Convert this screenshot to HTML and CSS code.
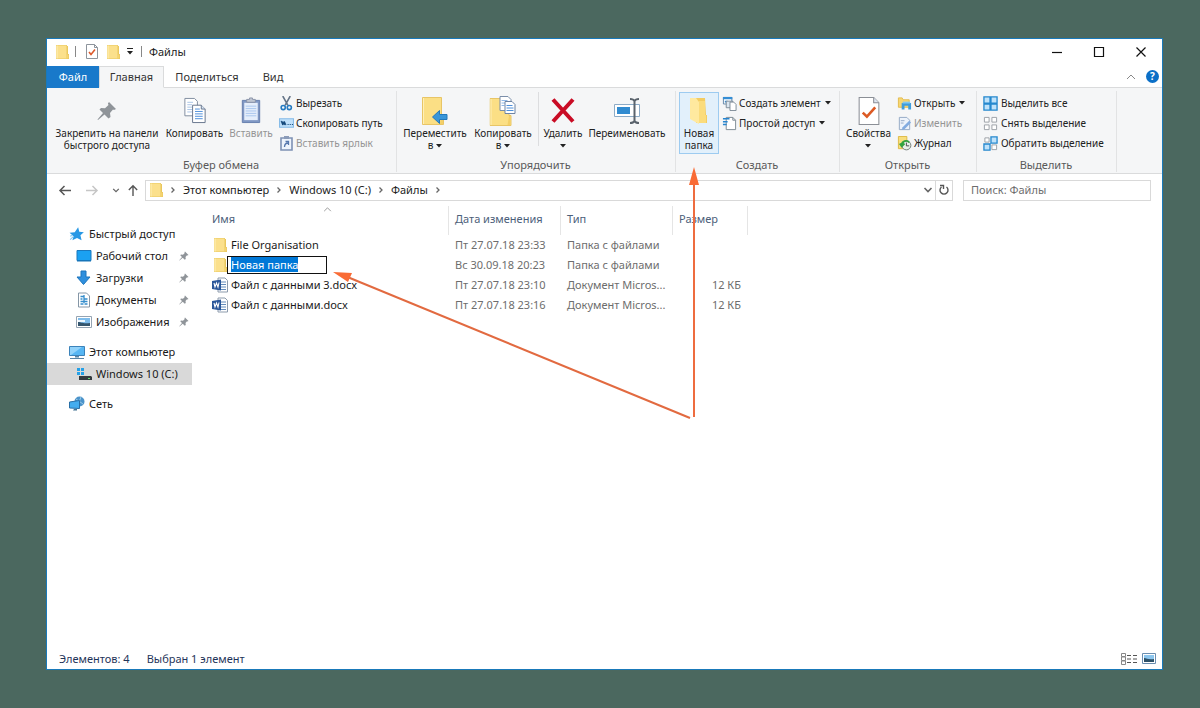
FILE: index.html
```html
<!DOCTYPE html>
<html lang="ru">
<head>
<meta charset="utf-8">
<title>Файлы</title>
<meta name="viewport" content="width=device-width, initial-scale=1">
<link rel="stylesheet" href="styles.css">
</head>
<body>
<svg class="sprite" aria-hidden="true">
  <symbol id="folder" viewBox="0 0 14 16"><path fill="#e9c75e" d="M1 1h11v1h1v8h1v5H1z"/><path fill="#fbe08c" d="M1.500 1.500h10v13h-10z"/><path fill="#fff0b8" d="M1.500 1.500h1v13h-1z"/><path fill="#f5d470" d="M12 10.500h1.500v4H11z"/></symbol>
  <symbol id="folder-big" viewBox="0 0 24 28"><path fill="#fbdf85" stroke="#e8c566" d="M.5.5h19v17h2v10H.5z"/><path fill="#f3cf68" d="M19.500 18h1.500v9h-3z"/><path fill="#fff0b8" d="M1 1h1v26H1z"/></symbol>
  <symbol id="folder-new" viewBox="0 0 20 28"><path fill="#f3cc62" d="M7 1h9l1 17h1v8H7z"/><path fill="#ffe99f" d="M1 1h6l3 4v22l-9-5z"/><path fill="#fbdc7c" d="M10 4h6v14h1v8h-7z"/></symbol>
  <symbol id="check-doc" viewBox="0 0 12 15"><path fill="#fff" stroke="#8d949c" d="M.5.5h8l3 3v11H.5z"/><path fill="none" stroke="#8d949c" d="M8.500.5v3h3"/><path fill="none" stroke="#dc5a2c" stroke-width="1.600" d="M3 8l2 2.500L9 5.500"/></symbol>
  <symbol id="props" viewBox="0 0 20 27"><path fill="#fff" stroke="#8b8f96" d="M.5.5h14l5 5v21H.5z"/><path fill="#dde5f0" stroke="#8b8f96" d="M14.500.5v5h5"/><path fill="none" stroke="#dc5a24" stroke-width="2.500" d="M4 15l4 4 8-9"/></symbol>
  <symbol id="pin" viewBox="0 0 20 20"><path fill="#8f9499" d="M12 1l7 7-2 1-1-.5-3 3.500.5 4-2 1.500-4-4L1 19l-.5-.5L6 12 2.500 8.500 4 7l4 .3 3.500-3.300-.6-1.500z"/></symbol>
  <symbol id="copy" viewBox="0 0 24 28"><path fill="#fff" stroke="#7f8b9e" d="M1.500 1.500h10l3 3v15h-13z"/><path stroke="#a9c4e6" d="M4 5.500h6M4 8h5M4 10.500h5M4 13h5M4 15.500h5"/><path fill="#fff" stroke="#66758c" d="M9.500 8.500h9l4 4v14h-13z"/><path fill="#d8e4f3" stroke="#66758c" d="M18.500 8.500v4h4"/><path stroke="#4e8fdb" d="M12 12.500h5M12 15h8M12 17.500h8M12 20h8M12 22.500h8"/></symbol>
  <symbol id="paste" viewBox="0 0 20 28"><path fill="#8098c4" stroke="#667fae" d="M1 3.500h18v23H1z"/><path fill="#e5eefb" d="M3 6h14v18H3z"/><path fill="#c0c7d3" stroke="#8993a8" d="M5.500 5.500v-3h3V1h3v1.500h3v3z"/><path stroke="#a9c6ed" d="M4.500 9.500h11M4.500 12h11M4.500 14.500h11M4.500 17h11M4.500 19.500h11"/></symbol>
  <symbol id="scissors" viewBox="0 0 14 16"><path fill="none" stroke="#647487" stroke-width="1.700" d="M3 0l5.500 10M11 0L5.500 10"/><circle cx="3.500" cy="12.300" r="2.200" fill="none" stroke="#247ac1" stroke-width="1.700"/><circle cx="10" cy="12.300" r="2.200" fill="none" stroke="#247ac1" stroke-width="1.700"/></symbol>
  <symbol id="path" viewBox="0 0 14 10"><path fill="#bfe0fa" stroke="#87bce8" d="M.5.5h13v8H.5z"/><path fill="none" stroke="#164a7c" d="M2 2.500l1.500 4V3L5 6.500V3l1.500 3.500M8 6h1M10 6h1M12 6h1"/></symbol>
  <symbol id="shortcut" viewBox="0 0 13 15"><path fill="#eef4fc" stroke="#7d91b4" stroke-width="1.600" d="M1 2h11v12H1z"/><path fill="#8b9bb8" d="M4 0h5v3H4z"/><path fill="none" stroke="#5577ad" stroke-width="1.300" d="M4.500 11c0-3 1-4 4-4M5.500 5.500h3v3.500"/></symbol>
  <symbol id="move" viewBox="0 0 26 28"><use href="#folder-big" width="24" height="28"/><path fill="#3996d9" stroke="#2479ba" d="M10.500 20l7-6.500v4h7.500v5h-7.500v4z"/></symbol>
  <symbol id="copy-to" viewBox="0 0 27 30"><use href="#folder-big" y="2" width="24" height="28"/><path fill="#fff" stroke="#7b8ea9" d="M10.500.5h8l3 3v11h-11z"/><path stroke="#90b8e6" d="M12 4.500h6M12 7h6M12 9.500h3"/><path fill="#fff" stroke="#6d84a5" d="M15.500 5.500h7l3 3v9h-10z"/><path stroke="#4f91dc" d="M17 9.500h6M17 12h7M17 14.500h7"/></symbol>
  <symbol id="delete" viewBox="0 0 24 26"><path fill="none" stroke="#c90c25" stroke-width="4" d="M2 2l20 22M22 2L2 24"/></symbol>
  <symbol id="rename" viewBox="0 0 28 28"><path fill="#fff" stroke="#8cabc7" d="M1.500 7.500h25v12h-25z"/><path fill="#318bd0" d="M4 10h13v7H4z"/><path fill="none" stroke="#5a636c" stroke-width="2" d="M17 2c3 0 4 1 4.500 2C22 3 23 2 26 2M21.500 4v20M17 26c3 0 4-1 4.500-2 .5 1 1.500 2 4.500 2"/></symbol>
  <symbol id="new-item" viewBox="0 0 16 16"><path fill="#fff" stroke="#5f83a7" d="M1.500 1.500h9v7h-9z"/><path fill="#348ed5" d="M1 1h10v2.500H1zM3 5h3v2H3z"/><path fill="#dce7f0" stroke="#7c8995" d="M4.500 5.500h7v7h-7z"/><path fill="#fff" stroke="#7c8995" d="M8.500 6.500h4l2.500 2.500v6.500H8.500z"/></symbol>
  <symbol id="easy" viewBox="0 0 16 16"><path fill="#fff" stroke="#7b8791" d="M4.500 1.500h7l3 3v10h-10z"/><path fill="none" stroke="#7b8791" d="M11.500 1.500v3h3"/><path fill="none" stroke="#2685d0" stroke-width="1.600" d="M1 3h7M1 6h5M1 9h4"/></symbol>
  <symbol id="open" viewBox="0 0 16 15"><path fill="#f7d773" stroke="#e3bb4e" d="M1.500 1.500h4l1 2H13v8H1.500z"/><path fill="#3e9ddd" d="M5 7h10v7h-3v-4H8v4H5z"/><path fill="#80c8f1" d="M6 5.500h8v2H6z"/></symbol>
  <symbol id="edit" viewBox="0 0 14 16"><path fill="#edf3fb" stroke="#92a7c4" d="M1.500 1.500h8l3 3v10h-11z"/><path fill="none" stroke="#92a7c4" d="M3 5h4M3 7.500h3"/><path fill="#83ace0" d="M12 5l2 2-7 7-3 1 1-3z"/></symbol>
  <symbol id="history" viewBox="0 0 16 16"><path fill="#f8de7c" stroke="#ddb944" d="M1.500.5h9v13h-9z"/><circle cx="10" cy="10" r="4.800" fill="#e8f0e8" stroke="#707b78"/><path fill="none" stroke="#33a33e" stroke-width="2" d="M3 8l2 3 3-3M5 10c0-5 6-6 8-3"/><path fill="none" stroke="#444" d="M10 7v3.500h3"/></symbol>
  <symbol id="select-all" viewBox="0 0 16 16"><path fill="#bfe2fa" stroke="#2588ce" stroke-width="1.400" d="M1 1h6.500v6.500H1zM8.500 1H15v6.500H8.500zM1 8.500h6.500V15H1zM8.500 8.500H15V15H8.500z"/></symbol>
  <symbol id="select-none" viewBox="0 0 16 16"><path fill="#fff" stroke="#9a9fa5" d="M1.500 1.500h5v5h-5zM9.500 1.500h5v5h-5zM1.500 9.500h5v5h-5zM9.500 9.500h5v5h-5z"/></symbol>
  <symbol id="invert" viewBox="0 0 16 16"><path fill="#fff" stroke="#9a9fa5" d="M2 2h4.500v4.500H2zM9.500 9.500h5v5h-5z"/><path fill="#bfe2fa" stroke="#2588ce" stroke-width="1.400" d="M8.500 1H15v6.500H8.500zM1 8.500h6.500V15H1z"/></symbol>
  <symbol id="star" viewBox="0 0 14 14"><path fill="#2798e5" d="M8 1l1 4 4 .4-3 2.700 1 4.400-4-2-4 2 1-3.500-3.500-3 4.500-.5z"/><path fill="none" stroke="#85caf5" d="M1 12l3-3M1 9l2-1"/></symbol>
  <symbol id="desktop" viewBox="0 0 16 14"><path fill="#1ba1f2" stroke="#1b78bd" d="M1 1.500h14v10H1z"/><path fill="#1675b9" d="M1 11h14v1.500H1z"/></symbol>
  <symbol id="download" viewBox="0 0 16 16"><path fill="#2f8fdd" stroke="#1c75bd" d="M5 1h5v6h4L7.500 14.500 1 7h4z"/></symbol>
  <symbol id="document" viewBox="0 0 13 16"><path fill="#fff" stroke="#8596a6" d="M1 1h8l3 3v11H1z"/><path stroke="#348dcc" stroke-width="1.300" d="M3 4.500h3M3 7h2M6 7h4M3 9.500h7M3 12h3M7 12h3M6.500 3v8"/></symbol>
  <symbol id="picture" viewBox="0 0 16 12"><path fill="#fff" stroke="#95a4b3" d="M.5.5h15v11H.5z"/><path fill="#7fbdec" d="M2 2h12v8H2z"/><path fill="#eef8ff" d="M2 4h7v2H2z"/><path fill="#35566e" d="M2 6c4 0 4 2 12 1v3H2z"/></symbol>
  <symbol id="computer" viewBox="0 0 16 16"><path fill="#57b6f3" stroke="#3c83ba" d="M.5 2.500h15v9H.5z"/><path fill="#91d2fa" d="M1 3h12L2 11H1z"/><path fill="#5783a5" d="M6 12h4v1.500H6zM1 14h14v1H1z"/></symbol>
  <symbol id="drive" viewBox="0 0 16 16"><path fill="#25a1e8" d="M1 2h3v3H1zM5 2h3v3H5zM1 6h3v3H1zM5 6h3v3H5z"/><path fill="#343a3f" d="M3 10h12l1 1v3H3z"/><path fill="#69df77" d="M12 12h2v1h-2z"/></symbol>
  <symbol id="network" viewBox="0 0 16 16"><circle cx="10.500" cy="5.500" r="5" fill="#4b93ca"/><path fill="none" stroke="#9bcce9" d="M7 3l7 5M12 1L9 9"/><path fill="#44adef" stroke="#286fa7" d="M.5 6l10-1.500v8L.5 12z"/><path fill="#427392" d="M5 13h3v1.500H4z"/></symbol>
  <symbol id="word" viewBox="0 0 16 16"><path fill="#fff" stroke="#8d9bac" d="M6 1h7l2.500 2.500V15H6z"/><path stroke="#648cba" d="M9 5h5M9 7.500h5M9 10h5M9 12.500h5"/><path fill="#2b579a" d="M0 4l9-1.500v11L0 12z"/><path fill="none" stroke="#fff" stroke-width="1.100" d="M2 6l1 4 1.500-4L6 10l1-4.500"/></symbol>
  <symbol id="chev-right" viewBox="0 0 8 8"><path fill="none" stroke="#666" stroke-width="1.300" d="M2.500 1.500L5 4 2.500 6.500"/></symbol>
  <symbol id="chev-down" viewBox="0 0 10 8"><path fill="none" stroke="#666" stroke-width="1.600" d="M1.500 2L5 5.500 8.500 2"/></symbol>
  <symbol id="chev-up" viewBox="0 0 10 6"><path fill="none" stroke="#888" d="M1 5l4-4 4 4"/></symbol>
  <symbol id="caret" viewBox="0 0 6 4"><path fill="#222" d="M0 0h6L3 3.500z"/></symbol>
  <symbol id="arrow-left" viewBox="0 0 14 12"><path fill="none" stroke="currentColor" stroke-width="1.500" d="M13 6H2M6.500 1.500L2 6l4.500 4.500"/></symbol>
  <symbol id="arrow-up" viewBox="0 0 12 14"><path fill="none" stroke="currentColor" stroke-width="1.500" d="M6 13V2M1.500 6.500L6 2l4.500 4.500"/></symbol>
</svg>

<div class="window">
  <header class="titlebar">
    <svg class="i-folder" aria-hidden="true"><use href="#folder"/></svg>
    <span class="tick"></span>
    <button class="quick" aria-label="Свойства"><svg class="i-check"><use href="#check-doc"/></svg></button>
    <button class="quick" aria-label="Новая папка"><svg class="i-folder"><use href="#folder"/></svg></button>
    <button class="quick quick-more" aria-label="Настройка панели"><svg class="i-more" viewBox="0 0 8 7"><path fill="#222" d="M1 0h6v1H1zM1 3h6L4 6.500z"/></svg></button>
    <span class="tick tick-end"></span>
    <h1 class="title">Файлы</h1>
    <div class="controls">
      <button aria-label="Свернуть"><svg class="i-ctl" viewBox="0 0 12 12"><path stroke="#111" stroke-width="1.200" d="M1 6.500h10"/></svg></button>
      <button aria-label="Развернуть"><svg class="i-ctl" viewBox="0 0 12 12"><path fill="none" stroke="#111" stroke-width="1.200" d="M1.500 1.500h9v9h-9z"/></svg></button>
      <button aria-label="Закрыть"><svg class="i-ctl" viewBox="0 0 12 12"><path stroke="#111" stroke-width="1.200" d="M1.500 1.500l9 9M10.500 1.500l-9 9"/></svg></button>
    </div>
  </header>

  <nav class="tabs" aria-label="Лента">
    <button class="tab tab-file">Файл</button>
    <button class="tab tab-active">Главная</button>
    <button class="tab tab-share">Поделиться</button>
    <button class="tab tab-view">Вид</button>
    <div class="tabs-end">
      <button class="quick" aria-label="Свернуть ленту"><svg class="i-chev-up"><use href="#chev-up"/></svg></button>
      <button class="help" aria-label="Справка">?</button>
    </div>
  </nav>

  <div class="ribbon">
    <section class="group g-clipboard">
      <div class="tools">
        <button class="big b-pin"><span class="pic"><svg class="i-20"><use href="#pin"/></svg></span><span>Закрепить на панели<br>быстрого доступа</span></button>
        <button class="big b-copy"><span class="pic"><svg class="i-24"><use href="#copy"/></svg></span><span>Копировать</span></button>
        <button class="big b-paste" disabled><span class="pic"><svg class="i-24"><use href="#paste"/></svg></span><span>Вставить</span></button>
        <div class="stack">
          <button class="small"><svg><use href="#scissors"/></svg>Вырезать</button>
          <button class="small"><svg><use href="#path"/></svg>Скопировать путь</button>
          <button class="small" disabled><svg><use href="#shortcut"/></svg>Вставить ярлык</button>
        </div>
      </div>
      <h2>Буфер обмена</h2>
    </section>
    <section class="group g-arrange">
      <div class="tools">
        <button class="big b-move"><span class="pic"><svg class="i-28"><use href="#move"/></svg></span><span>Переместить<br>в <svg class="i-caret"><use href="#caret"/></svg></span></button>
        <button class="big b-copy-to"><span class="pic"><svg class="i-30"><use href="#copy-to"/></svg></span><span>Копировать<br>в <svg class="i-caret"><use href="#caret"/></svg></span></button>
        <span class="rule"></span>
        <button class="big b-delete"><span class="pic"><svg class="i-24"><use href="#delete"/></svg></span><span>Удалить<br><svg class="i-caret"><use href="#caret"/></svg></span></button>
        <button class="big b-rename"><span class="pic"><svg class="i-28"><use href="#rename"/></svg></span><span>Переименовать</span></button>
      </div>
      <h2>Упорядочить</h2>
    </section>
    <section class="group g-new">
      <div class="tools">
        <button class="big b-new"><span class="pic"><svg class="i-28"><use href="#folder-new"/></svg></span><span>Новая<br>папка</span></button>
        <div class="stack">
          <button class="small"><svg><use href="#new-item"/></svg>Создать элемент<svg class="i-caret"><use href="#caret"/></svg></button>
          <button class="small"><svg><use href="#easy"/></svg>Простой доступ<svg class="i-caret"><use href="#caret"/></svg></button>
        </div>
      </div>
      <h2>Создать</h2>
    </section>
    <section class="group g-open">
      <div class="tools">
        <button class="big b-props"><span class="pic"><svg class="i-28"><use href="#props"/></svg></span><span>Свойства<br><svg class="i-caret"><use href="#caret"/></svg></span></button>
        <div class="stack">
          <button class="small"><svg><use href="#open"/></svg>Открыть<svg class="i-caret"><use href="#caret"/></svg></button>
          <button class="small" disabled><svg><use href="#edit"/></svg>Изменить</button>
          <button class="small"><svg><use href="#history"/></svg>Журнал</button>
        </div>
      </div>
      <h2>Открыть</h2>
    </section>
    <section class="group g-select">
      <div class="tools">
        <div class="stack">
          <button class="small"><svg><use href="#select-all"/></svg>Выделить все</button>
          <button class="small"><svg><use href="#select-none"/></svg>Снять выделение</button>
          <button class="small"><svg><use href="#invert"/></svg>Обратить выделение</button>
        </div>
      </div>
      <h2>Выделить</h2>
    </section>
  </div>

  <div class="location">
    <button class="go" aria-label="Назад"><svg class="i-arrow"><use href="#arrow-left"/></svg></button>
    <button class="go go-off" aria-label="Вперёд" disabled><svg class="i-arrow i-flip"><use href="#arrow-left"/></svg></button>
    <button class="go go-recent" aria-label="Последние"><svg class="i-8"><use href="#chev-down"/></svg></button>
    <button class="go go-up" aria-label="Вверх"><svg class="i-arrow"><use href="#arrow-up"/></svg></button>
    <nav class="address" aria-label="Адрес">
      <svg class="i-folder"><use href="#folder"/></svg>
      <svg class="i-sep"><use href="#chev-right"/></svg>
      <a href="#computer">Этот компьютер</a>
      <svg class="i-sep"><use href="#chev-right"/></svg>
      <a href="#drive">Windows 10 (C:)</a>
      <svg class="i-sep"><use href="#chev-right"/></svg>
      <a href="#folder">Файлы</a>
      <svg class="i-sep"><use href="#chev-right"/></svg>
      <button class="drop" aria-label="Журнал адресов"><svg class="i-10"><use href="#chev-down"/></svg></button>
      <button class="refresh" aria-label="Обновить"><svg class="i-12" viewBox="0 0 12 12"><path fill="none" stroke="#555" stroke-width="1.400" d="M8.500 3a4 4 0 1 1-5 0M2 1.500h3.500V5"/></svg></button>
    </nav>
    <input class="search" type="search" placeholder="Поиск: Файлы" aria-label="Поиск: Файлы">
  </div>

  <div class="body">
    <nav class="tree" aria-label="Папки">
      <a class="root" href="#quick"><svg><use href="#star"/></svg>Быстрый доступ</a>
      <a href="#desktop"><svg><use href="#desktop"/></svg>Рабочий стол<svg class="i-pin"><use href="#pin"/></svg></a>
      <a href="#download"><svg><use href="#download"/></svg>Загрузки<svg class="i-pin"><use href="#pin"/></svg></a>
      <a href="#document"><svg><use href="#document"/></svg>Документы<svg class="i-pin"><use href="#pin"/></svg></a>
      <a href="#picture"><svg><use href="#picture"/></svg>Изображения<svg class="i-pin"><use href="#pin"/></svg></a>
      <a class="root spaced" href="#computer"><svg><use href="#computer"/></svg>Этот компьютер</a>
      <a class="current" href="#drive"><svg><use href="#drive"/></svg>Windows 10 (C:)</a>
      <a class="root spaced" href="#network"><svg><use href="#network"/></svg>Сеть</a>
    </nav>
    <main class="content">
      <table class="files">
        <thead>
          <tr><th class="c-name" scope="col">Имя<svg class="i-sort"><use href="#chev-up"/></svg></th><th class="c-date" scope="col">Дата изменения</th><th class="c-type" scope="col">Тип</th><th class="c-size" scope="col">Размер</th></tr>
        </thead>
        <tbody>
          <tr><td><div class="file"><svg><use href="#folder"/></svg>File Organisation</div></td><td>Пт 27.07.18 23:33</td><td>Папка с файлами</td><td></td></tr>
          <tr><td><div class="file"><svg><use href="#folder"/></svg><input class="rename" value="Новая папка" aria-label="Имя папки" autofocus></div></td><td>Вс 30.09.18 20:23</td><td>Папка с файлами</td><td></td></tr>
          <tr><td><div class="file"><svg><use href="#word"/></svg>Файл с данными 3.docx</div></td><td>Пт 27.07.18 23:10</td><td>Документ Micros...</td><td>12 КБ</td></tr>
          <tr><td><div class="file"><svg><use href="#word"/></svg>Файл с данными.docx</div></td><td>Пт 27.07.18 23:16</td><td>Документ Micros...</td><td>12 КБ</td></tr>
        </tbody>
      </table>
    </main>
  </div>

  <footer class="status">
    <span>Элементов: 4</span>
    <span>Выбран 1 элемент</span>
    <div class="views">
      <button class="quick" aria-label="Таблица"><svg class="i-view" viewBox="0 0 16 12"><path fill="#fff" stroke="#888" d="M.5.5h4v3h-4zM.5 4h4v3.500h-4zM.5 8h4v3.500h-4z"/><path stroke="#555" d="M6 2.500h4M12 2.500h4M6 6h4M12 6h4M6 9.500h4M12 9.500h4"/></svg></button>
      <button class="quick" aria-label="Крупные значки"><svg class="i-thumb" viewBox="0 0 14 12"><path fill="#fff" stroke="#6b8eb0" d="M.5.5h13v10H.5z"/><path fill="#8cc6ee" d="M2 2h10v7H2z"/><path fill="#2d5168" d="M2 5c3 0 4 2 10 1v3H2z"/></svg></button>
    </div>
  </footer>

  <svg class="arrows" viewBox="0 0 370 260" aria-hidden="true">
    <path stroke="#ee6c3f" stroke-width="2" d="M361 14V250"/>
    <path stroke="#e26a40" stroke-width="2" d="M12 109L357 251"/>
    <path fill="#f96b35" d="M361 0l5 18h-10zM0 105l19 1-4 9z"/>
  </svg>
</div>
<script src="script.js"></script>
</body>
</html>
```
FILE: styles.css
```css
* { box-sizing: border-box; }

body {
  margin: 0;
  min-height: 100vh;
  padding: 38px 37px 38px 46px;
  display: flex;
  background: #4b685f;
  color: #222;
  font: 11px/12px "Noto Sans", "Open Sans", sans-serif;
}

button, input { font: inherit; color: inherit; margin: 0; }
button { padding: 0; border: 0; background: none; }
a { color: inherit; text-decoration: none; }
svg { flex: none; }
h1, h2 { margin: 0; font-size: 11px; font-weight: 400; }
.sprite { position: absolute; width: 0; height: 0; }

.window {
  position: relative;
  flex: 1;
  min-width: 0;
  display: flex;
  flex-direction: column;
  border: 1px solid #1979b9;
  background: #fff;
}

/* Title bar */
.titlebar { display: flex; align-items: center; height: 27px; padding: 0 0 2px 8px; }
.quick { display: flex; align-items: center; }
.i-folder { width: 14px; height: 16px; }
.i-check { width: 12px; height: 15px; }
.i-more { width: 8px; height: 7px; }
.tick { width: 1px; height: 11px; margin: 0 10px 0 6px; background: #888; }
.tick-end { margin: 0 7px; }
.titlebar .quick { margin-right: 8px; }
.titlebar .quick-more { margin: 0 0 0 -2px; }
.controls { display: flex; align-self: stretch; margin-left: auto; }
.controls button { width: 42px; display: grid; place-items: center; }
.i-ctl { width: 12px; height: 12px; }

/* Tabs */
.tabs { display: flex; height: 22px; background: #fff; border-bottom: 1px solid #dadbdc; color: #333; }
.tab { height: 22px; border: 1px solid transparent; }
.tab-file { width: 52px; background: #1979ca; color: #fff; }
.tab-active { width: 65px; border-color: #dadbdc; border-bottom-color: #f5f6f7; background: #f5f6f7; }
.tab-share { width: 86px; }
.tab-view { width: 46px; }
.tabs-end { display: flex; align-items: center; gap: 10px; margin-left: auto; padding-right: 3px; }
.i-chev-up { width: 10px; height: 6px; }
.help { width: 13px; height: 13px; border-radius: 50%; background: #0b6fc7; color: #fff; font-size: 10px; font-weight: 700; line-height: 13px; }

/* Ribbon */
.ribbon { display: flex; height: 86px; padding-top: 3px; background: #f5f6f7; border-bottom: 1px solid #dadbdc; color: #222; }
.group { display: flex; flex-direction: column; justify-content: space-between; padding: 1px 0 0 3px; border-right: 1px solid #e2e3e4; margin-bottom: 1px; }
.group h2 { padding-right: 4px; text-align: center; color: #5a5a5a; line-height: 14px; }
.g-clipboard { width: 350px; }
.g-arrange { width: 279px; }
.g-new { width: 164px; }
.g-open { width: 137px; }
.g-select { width: 140px; }
.tools { display: flex; font-size: 10px; }
.big { height: 62px; padding-top: 1px; display: flex; flex-direction: column; align-items: center; border: 1px solid transparent; text-align: center; line-height: 12px; white-space: nowrap; }
.pic { display: grid; place-items: center; height: 33px; }
button:disabled { color: #949494; }
.b-pin { width: 114px; }
.b-copy { width: 61px; }
.b-paste { width: 52px; }
.b-move { width: 70px; }
.b-copy-to { width: 66px; }
.b-delete { width: 44px; }
.b-rename { width: 84px; }
.b-new { width: 40px; border-color: #9dcbf0; background: #e2f0fb; }
.b-props { width: 51px; }
.rule { width: 1px; height: 54px; margin: 0 2px; background: #dcdddf; }
.stack { display: flex; flex-direction: column; padding: 1px 0 0 3px; }
.g-clipboard .stack { padding-left: 2px; }
.small { display: flex; align-items: center; gap: 2px; height: 20px; white-space: nowrap; }
.small svg { width: 15px; height: 15px; }
.small .i-caret { width: 6px; height: 4px; margin-left: 2px; }
.g-select .small { gap: 3px; }
.i-caret { width: 6px; height: 4px; vertical-align: middle; }
.i-20 { width: 20px; height: 20px; }
.i-24 { width: 24px; height: 27px; }
.i-28 { width: 28px; height: 28px; }
.i-30 { width: 30px; height: 30px; }

/* Location bar */
.location { display: flex; align-items: center; height: 32px; padding: 0 11px; }
.go { width: 27px; display: flex; color: #555; }
.go:disabled { color: #c6c6c6; }
.go-recent { width: 14px; }
.go-up { width: 19px; }
.i-arrow { width: 14px; height: 13px; }
.i-flip { transform: scaleX(-1); }
.i-8 { width: 8px; height: 7px; }
.i-10 { width: 10px; height: 8px; }
.i-12 { width: 12px; height: 12px; }
.address { flex: 1; min-width: 0; display: flex; align-items: center; height: 21px; padding-left: 3px; border: 1px solid #d9d9d9; white-space: nowrap; }
.i-sep { width: 8px; height: 8px; margin: 0 6px; }
.drop { margin-left: auto; padding: 0 2px; display: flex; }
.refresh { align-self: stretch; width: 17px; display: grid; place-items: center; border-left: 1px solid #d9d9d9; }
.search { width: 188px; height: 21px; margin-left: 10px; padding: 0 7px 2px; border: 1px solid #d9d9d9; background: #fff; appearance: none; outline: 0; }
.search::placeholder { color: #6d6d6d; opacity: 1; }

/* Body */
.body { flex: 1; display: flex; }
.tree { width: 145px; padding-top: 17px; color: #1a1a1a; }
.tree a { display: flex; align-items: center; gap: 4px; height: 22px; padding-left: 29px; white-space: nowrap; }
.tree svg { width: 16px; height: 16px; }
.tree .root { padding-left: 22px; }
.tree .spaced { margin-top: 8px; }
.tree .current { background: #d9d9d9; }
.tree .i-pin { width: 10px; height: 10px; margin: 0 3px 0 auto; }
.content { flex: 1; min-width: 0; padding-left: 20px; }
.files { width: 536px; table-layout: fixed; border-collapse: separate; border-spacing: 0; color: #6d6d6d; }
.files th { position: relative; height: 29px; padding: 0 0 3px 6px; border-right: 1px solid #e5e5e5; color: #4c607a; font-weight: 400; text-align: left; }
.files .c-name { padding-left: 0; }
.c-name { width: 237px; }
.c-date, .c-type { width: 112px; }
.c-size { width: 75px; }
.i-sort { position: absolute; left: 111px; top: 1px; width: 9px; height: 5px; }
.files td { height: 20px; padding: 0 0 0 6px; white-space: nowrap; }
.files td:first-child { padding-left: 0; color: #1a1a1a; }
.files td:last-child { padding-right: 7px; text-align: right; }
.file { display: flex; align-items: center; gap: 3px; height: 20px; }
.file svg { width: 16px; height: 16px; }
.rename { width: 100px; height: 18px; margin-left: -4px; padding: 0 3px 2px; border: 1px solid #111; outline: 0; background: #fff; }
.rename::selection { background: #0078d7; color: #fff; }

/* Status bar */
.status { display: flex; align-items: center; gap: 17px; height: 21px; padding: 0 6px 0 12px; color: #1f355a; }
.views { display: flex; gap: 5px; margin-left: auto; }
.i-view { width: 16px; height: 12px; }
.i-thumb { width: 14px; height: 12px; }

/* Pointers laid over the window */
.arrows { position: absolute; left: 286px; top: 128px; width: 370px; height: 260px; fill: none; pointer-events: none; }
```
FILE: script.js
```js
const nameField = document.querySelector(".rename");
nameField.focus();
nameField.select();
```
